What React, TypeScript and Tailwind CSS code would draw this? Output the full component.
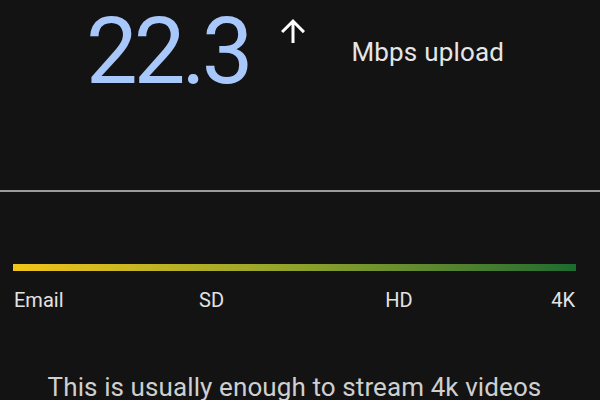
import React from "react";

export default function App() {
  return (
    <div
      className="w-[600px] h-[400px] overflow-hidden bg-[#131313] flex flex-col"
      style={{ fontFamily: "Roboto, 'Noto Sans', sans-serif" }}
    >
      <div className="h-[192px] flex flex-row items-start pl-[86px]">
        <div className="mt-[6px] text-[92px] leading-none tracking-[-4px] text-[#a8c7fa] font-normal">22.3</div>
        <svg
          className="ml-[26px] mt-[13px]"
          width="36"
          height="36"
          viewBox="0 0 24 24"
          fill="#ffffff"
        >
          <path d="M4 12l1.41 1.41L11 7.83V20h2V7.83l5.58 5.59L20 12l-8-8-8 8z" />
        </svg>
        <div className="ml-[40px] mt-[39px] text-[26px] leading-none tracking-[0.2px] text-[#e6e6e6] whitespace-nowrap">Mbps upload</div>
      </div>
      <div className="h-[2px] bg-[#9c9c9c]" />
      <div className="mt-[72px] ml-[13px] w-[563px] h-[7px] bg-linear-to-r from-[#f2c417] via-[#8fa32a] to-[#1b6b2f]" />
      <div className="mt-[19px] flex flex-row text-[20px] leading-none text-[#e3e3e3]">
        <div className="w-[150px] pl-[14px] text-left">Email</div>
        <div className="w-[123px] text-center">SD</div>
        <div className="w-[252px] text-center">HD</div>
        <div className="flex-1 text-right pr-[25px]">4K</div>
      </div>
      <div className="mt-[64px] pr-[11px] text-center text-[26px] leading-none tracking-[0.1px] text-[#cfcfcf] whitespace-nowrap">
        This is usually enough to stream 4k videos
      </div>
    </div>
  );
}
